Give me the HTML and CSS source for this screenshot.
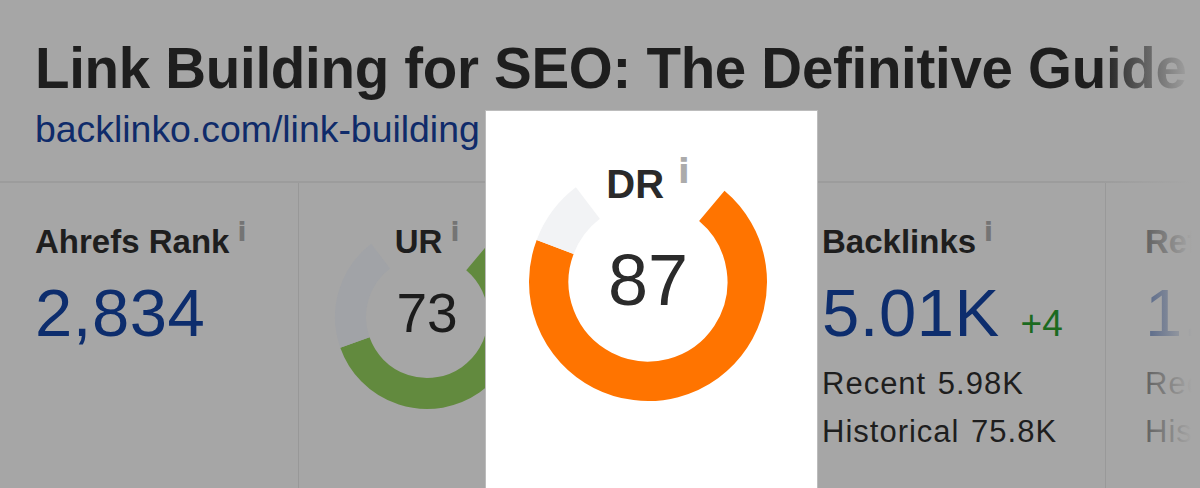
FILE: index.html
```html
<!DOCTYPE html>
<html lang="en">
<head>
<meta charset="utf-8">
<title>Link Building for SEO: The Definitive Guide</title>
<link rel="stylesheet" href="styles.css">
</head>
<body>
<div class="page">
  <header class="head">
    <h1 class="title">Link Building for SEO: The Definitive Guide</h1>
    <a class="url" href="#">backlinko.com/link-building</a>
  </header>

  <section class="stats">
    <div class="stat stat-rank">
      <div class="label">Ahrefs Rank<span class="info">i</span></div>
      <div class="value">2,834</div>
    </div>

    <div class="stat stat-ur">
      <div class="gauge gauge-ur">
        <svg class="ring" viewBox="0 0 192 192" width="192" height="192" aria-hidden="true">
          <path d="M145.17 37.40 A76.5 76.5 0 1 1 23.89 121.54" fill="none" stroke="#628a3e" stroke-width="31"/>
          <path d="M23.89 121.54 A76.5 76.5 0 0 1 49.64 35.14" fill="none" stroke="#a1a3a7" stroke-width="31"/>
        </svg>
        <div class="gauge-label">UR<span class="info">i</span></div>
        <div class="gauge-num">73</div>
      </div>
    </div>

    <div class="stat stat-dr">
      <div class="dr-card">
        <div class="gauge gauge-dr">
          <svg class="ring" viewBox="0 0 240 240" width="240" height="240" aria-hidden="true">
            <path d="M183.80 43.97 A99.25 99.25 0 1 1 27.16 84.92" fill="none" stroke="#ff7400" stroke-width="39.5"/>
            <path d="M27.16 84.92 A99.25 99.25 0 0 1 59.85 41.05" fill="none" stroke="#f2f3f5" stroke-width="39.5"/>
          </svg>
          <div class="gauge-label">DR<span class="info">i</span></div>
          <div class="gauge-num">87</div>
        </div>
      </div>
    </div>

    <div class="stat stat-backlinks">
      <div class="label">Backlinks<span class="info">i</span></div>
      <div class="value-row">
        <span class="value">5.01K</span>
        <span class="delta">+4</span>
      </div>
      <div class="sub">Recent 5.98K</div>
      <div class="sub">Historical 75.8K</div>
    </div>

    <div class="stat stat-ref">
      <div class="label">Referring domains<span class="info">i</span></div>
      <div class="value-row">
        <span class="value">1.21K</span>
      </div>
      <div class="sub">Recent 1.35K</div>
      <div class="sub">Historical 4.92K</div>
    </div>
  </section>

  <div class="fade"></div>
</div>
</body>
</html>
```
FILE: styles.css
```css
html, body {
  margin: 0;
  padding: 0;
}

body {
  background: #a6a6a6;
  font-family: "Liberation Sans", Arial, Helvetica, sans-serif;
}

.page {
  position: relative;
  width: 1200px;
  height: 488px;
  overflow: hidden;
  background: #a6a6a6;
}

/* ---------- header ---------- */
.head {
  box-sizing: border-box;
  height: 181px;
  padding: 41px 0 0 35px;
}

.title {
  margin: 0;
  font-size: 56.5px;
  line-height: 56px;
  font-weight: 700;
  letter-spacing: -0.3px;
  color: #1e1e1e;
  white-space: nowrap;
}

.url {
  display: block;
  margin-top: 14px;
  font-size: 37.4px;
  line-height: 37px;
  color: #0f2b6a;
  text-decoration: none;
  white-space: nowrap;
}

/* ---------- stats row ---------- */
.stats {
  display: grid;
  grid-template-columns: 299px 258px 230px 319px 1fr;
  height: 305px;
  border-top: 2px solid #9c9c9c;
}

.stat {
  box-sizing: border-box;
  padding-top: 42px;
  white-space: nowrap;
}

.stat-rank {
  padding-left: 35px;
  border-right: 1px solid #989898;
}

.stat-ur {
  padding-top: 38px;
  padding-left: 32px;
}

.stat-dr {
  position: relative;
}

.stat-backlinks {
  padding-left: 35px;
  border-right: 1px solid #989898;
}

.stat-ref {
  padding-left: 39px;
}

.label {
  font-size: 33px;
  line-height: 33px;
  font-weight: 700;
  color: #1e1e1e;
}

.info {
  font-family: "DejaVu Sans", "Liberation Sans", sans-serif;
  font-size: 26px;
  line-height: 0;
  font-weight: 700;
  color: #747474;
  margin-left: 8px;
  vertical-align: 12px;
}

.value {
  display: block;
  margin-top: 22px;
  font-size: 67px;
  line-height: 66px;
  letter-spacing: 0.5px;
  color: #0d2d6d;
}

.value-row {
  display: flex;
  align-items: baseline;
  margin-top: 22px;
}

.value-row .value {
  margin-top: 0;
}

.delta {
  margin-left: 21px;
  font-size: 37px;
  line-height: 37px;
  color: #1b6a1f;
}

.sub {
  font-size: 31px;
  line-height: 48px;
  letter-spacing: 1px;
  word-spacing: 2px;
  color: #1e1e1e;
}

.value-row + .sub {
  margin-top: 14px;
}

/* ---------- gauges ---------- */
.gauge {
  position: relative;
}

.ring {
  display: block;
}

.gauge-ur {
  width: 192px;
  height: 192px;
}

.gauge-label {
  position: absolute;
  left: 0;
  right: 0;
  text-align: center;
  font-weight: 700;
  white-space: nowrap;
}

.gauge-ur .gauge-label {
  top: 4px;
  font-size: 33px;
  line-height: 33px;
  color: #1e1e1e;
}

.gauge-num {
  position: absolute;
  left: 0;
  right: 0;
  text-align: center;
}

.gauge-ur .gauge-num {
  top: 65px;
  font-size: 55px;
  line-height: 55px;
  color: #1c1c1c;
}

/* ---------- highlighted DR card ---------- */
.dr-card {
  position: absolute;
  left: -72px;
  top: -73px;
  z-index: 2;
  box-sizing: border-box;
  width: 333px;
  height: 400px;
  padding: 51px 0 0 42px;
  background: #ffffff;
  border: 1px solid #bcbcbc;
}

.gauge-dr {
  width: 240px;
  height: 240px;
}

.gauge-dr .gauge-label {
  top: 2px;
  font-size: 40px;
  line-height: 40px;
  color: #2a2a2a;
}

.gauge-dr .info {
  font-size: 34px;
  color: #ababab;
  margin-left: 14px;
  vertical-align: 15px;
}

.gauge-dr .gauge-num {
  top: 82px;
  font-size: 72px;
  line-height: 72px;
  color: #2b2b2b;
}

/* ---------- right-edge fade ---------- */
.fade {
  position: absolute;
  top: 0;
  right: 0;
  z-index: 3;
  width: 100px;
  height: 100%;
  background: linear-gradient(to right, rgba(166, 166, 166, 0) 0%, rgba(166, 166, 166, 1) 92%);
  pointer-events: none;
}
```
